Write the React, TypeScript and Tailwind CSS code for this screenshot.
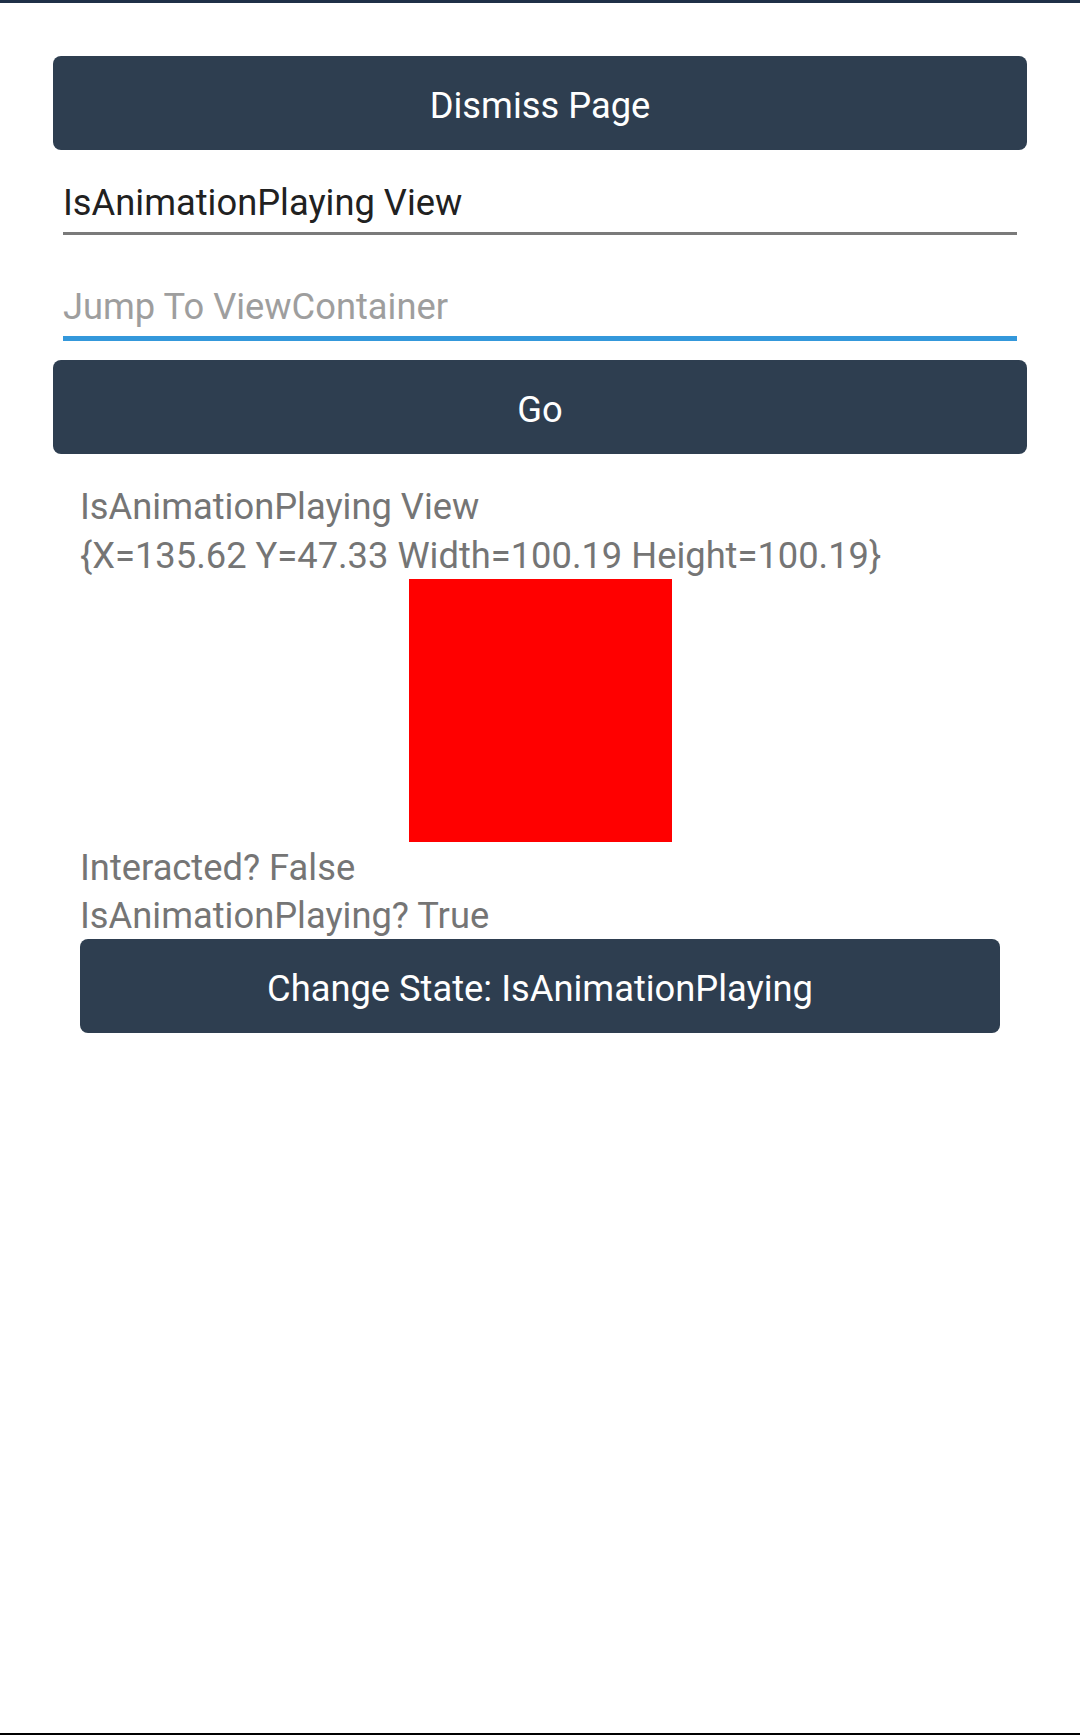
const FONT = "font-['Roboto','Liberation_Sans',sans-serif]";

function DarkButton({ label, className = "" }: { label: string; className?: string }) {
  return (
    <button
      className={`flex h-[94px] w-full items-center justify-center rounded-[8px] bg-[#2e3e50] pt-[4px] text-[36.3px] leading-[43px] text-white ${className}`}
    >
      {label}
    </button>
  );
}

function Field({
  value,
  placeholder,
  focused,
}: {
  value?: string;
  placeholder: string;
  focused?: boolean;
}) {
  return (
    <div className="px-[10px] pt-[32px] pb-[19px]">
      <div
        className={`text-[36.3px] leading-[42px] ${
          value ? "text-[#212121]" : "text-[#9e9e9e]"
        }`}
      >
        {value ?? placeholder}
      </div>
      <div
        className={`mt-[8px] ${
          focused ? "h-[5px] bg-[#3498db]" : "h-[3px] bg-[#7a7a7a]"
        }`}
      />
    </div>
  );
}

function Line({ children }: { children: React.ReactNode }) {
  return <div className="pt-[3px] leading-[45.8px]">{children}</div>;
}

export default function App() {
  return (
    <div className={`flex min-h-[1735px] flex-col bg-white ${FONT}`}>
      {/* top edge of the nav bar */}
      <div className="h-[3px] bg-[#1f3047]" />

      <div className="flex flex-1 flex-col px-[53px] pt-[53px]">
        <DarkButton label="Dismiss Page" />
        <Field value="IsAnimationPlaying View" placeholder="" />
        <Field placeholder="Jump To ViewContainer" focused />
        <DarkButton label="Go" />

        <div className="m-[27px] flex flex-col text-[36.3px] text-[#757575]">
          <Line>IsAnimationPlaying View</Line>
          <Line>{"{X=135.62 Y=47.33 Width=100.19 Height=100.19}"}</Line>
          <div className="flex justify-center">
            <div className="h-[263px] w-[263px] bg-[#ff0000]" />
          </div>
          <Line>Interacted? False</Line>
          <Line>IsAnimationPlaying? True</Line>
          <DarkButton label="Change State: IsAnimationPlaying" />
        </div>
      </div>

      <div className="h-[2px] bg-black" />
    </div>
  );
}
